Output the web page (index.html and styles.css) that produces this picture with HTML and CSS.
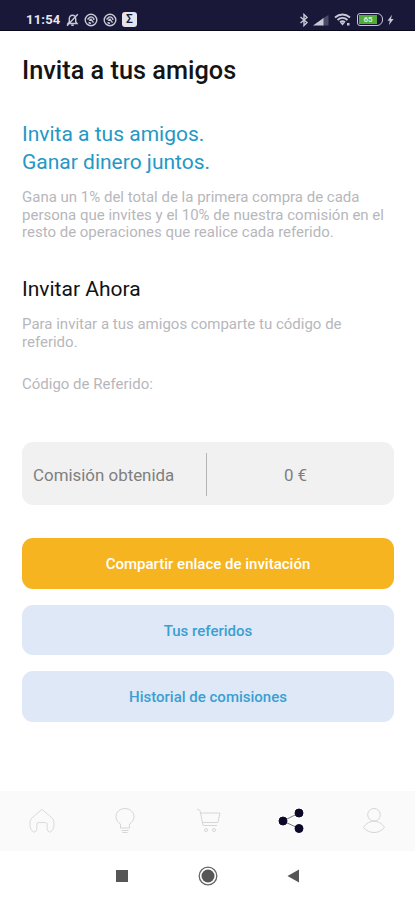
FILE: index.html
```html
<!DOCTYPE html>
<html lang="es">
<head>
  <meta charset="UTF-8">
  <meta name="viewport" content="width=device-width, initial-scale=1">
  <title>Invita a tus amigos</title>
  <link rel="stylesheet" href="styles.css">
</head>
<body>
<div class="screen">
  <header class="status-bar">
    <div class="status-left">
      <span class="clock">11:54</span>
      <svg class="bell" width="13" height="14" viewBox="0 0 13 14">
        <path d="M2 10.5h9L9.7 8.8V5.5C9.7 3.5 8.5 2.3 6.5 2.3S3.3 3.5 3.3 5.5v3.3zM5.3 12.3h2.4M1 12.8 11.8 1.2"/>
      </svg>
      <svg class="sync" width="14" height="14" viewBox="0 0 14 14">
        <circle cx="7" cy="7" r="5.8"/>
        <path d="M3.5 6.5 6 4.2c1.500-.8 3.800.2 4 2.800M5 7.500l2-1.300 2.500 3.500M4.500 9.500l2.500 1"/>
      </svg>
      <svg class="sync" width="14" height="14" viewBox="0 0 14 14">
        <circle cx="7" cy="7" r="5.8"/>
        <path d="M3.5 6.5 6 4.2c1.500-.8 3.800.2 4 2.800M5 7.500l2-1.300 2.500 3.500M4.500 9.500l2.500 1"/>
      </svg>
      <span class="sigma">Σ</span>
    </div>
    <div class="status-right">
      <svg class="bluetooth" width="10" height="14" viewBox="0 0 10 14">
        <path d="m1.500 4 6.500 5.500L5 12.500v-11l3 3L1.500 10"/>
      </svg>
      <svg class="signal" width="16" height="12" viewBox="0 0 16 12">
        <path class="weak" d="M9 4.800 15.500 1v10.500H9z"/>
        <path d="M0 11.500 10.500 4v7.500z"/>
      </svg>
      <svg class="wifi" width="17" height="13" viewBox="0 0 17 13">
        <path d="M1 4.500c4.500-4 10.500-4 15 0M3.500 7c3-2.700 7-2.700 10 0M6 9.300c1.500-1.300 3.500-1.300 5 0"/>
        <path class="fill" d="m6 9.500 2.500 3 2.500-3zM13 10h2.500v2.500H13z"/>
      </svg>
      <span class="battery"><span class="charge">65</span></span>
      <svg class="bolt" width="7" height="12" viewBox="0 0 7 12">
        <path d="M5 .8.5 6.700h2.300L1.800 11.300 6.600 5H4z"/>
      </svg>
    </div>
  </header>

  <main class="content">
    <h1>Invita a tus amigos</h1>

    <h2 class="slogan">Invita a tus amigos.<br>Ganar dinero juntos.</h2>
    <p class="intro">Gana un 1% del total de la primera compra de cada<br>persona que invites y el 10% de nuestra comisión en el<br>resto de operaciones que realice cada referido.</p>

    <h2 class="invite">Invitar Ahora</h2>
    <p class="hint">Para invitar a tus amigos comparte tu código de<br>referido.</p>
    <p class="code">Código de Referido:</p>

    <div class="commission">
      <span class="commission-label">Comisión obtenida</span>
      <span class="commission-value">0 €</span>
    </div>

    <div class="actions">
      <button class="btn primary">Compartir enlace de invitación</button>
      <button class="btn">Tus referidos</button>
      <button class="btn">Historial de comisiones</button>
    </div>
  </main>

  <nav class="tabs">
    <a class="tab">
      <svg width="28" height="28" viewBox="0 0 30 30">
        <path d="M15 2.500 4.500 11.500C2 14 2 16 2.200 20c.3 3.500 1.800 6 4.300 7 1.500 0 3-2 3-4v-4.800c0-1 .5-1.500 1.500-1.500h8c1 0 1.500.5 1.500 1.500V23c0 2 1.500 4 3 4 2.500-1 4-3.500 4.300-7 .2-4 .2-6-2.300-8.500z"/>
      </svg>
    </a>
    <a class="tab">
      <svg width="30" height="30" viewBox="0 0 30 30">
        <path d="M10.500 22v-4C8 16.500 6 14 6 10.800 6 6 10 2.500 15 2.500s9 3.500 9 8.300c0 3.200-2 5.700-4.500 7.200v4zM11.500 24.500h7M12.500 26.500h5"/>
      </svg>
    </a>
    <a class="tab">
      <svg width="30" height="30" viewBox="0 0 30 30">
        <path d="M4 3l3 1.500L10 19.500h14M7.500 7h19.500l-2.200 9.500H9.500"/>
        <circle cx="13" cy="24" r="1.500"/>
        <circle cx="21" cy="24" r="1.500"/>
      </svg>
    </a>
    <a class="tab active">
      <svg width="30" height="30" viewBox="0 0 30 30">
        <path d="M23 7 7 15l16 7.500"/>
        <circle cx="23" cy="7" r="4"/>
        <circle cx="7" cy="15" r="4"/>
        <circle cx="23" cy="22.5" r="4"/>
      </svg>
    </a>
    <a class="tab">
      <svg width="30" height="30" viewBox="0 0 30 30">
        <circle cx="15" cy="8.8" r="6.3"/>
        <path d="M4.500 21.500c3-4.500 6.500-6.200 10.500-6.200s7.500 1.700 10.500 6.200c-3 3.500-6.500 5-10.500 5S7.500 25 4.500 21.500z"/>
      </svg>
    </a>
  </nav>

  <footer class="system-nav">
    <svg width="20" height="20" viewBox="0 0 20 20"><path d="M4 4h12v12H4z"/></svg>
    <svg width="20" height="20" viewBox="0 0 20 20">
      <circle class="ring" cx="10" cy="10" r="8.8"/>
      <circle cx="10" cy="10" r="6.5"/>
    </svg>
    <svg width="20" height="20" viewBox="0 0 20 20"><path d="M3.500 10 15 3.500v13z"/></svg>
  </footer>
</div>
</body>
</html>
```

FILE: styles.css
```css
:root {
  --navy: #191839;
  --blue: #2498c5;
  --muted: #b7b7bb;
  --yellow: #f7b421;
  --light-blue: #dfe8f6;
}

* {
  box-sizing: border-box;
}

body {
  margin: 0;
  font-family: Roboto, "Liberation Sans", sans-serif;
  background: #fff;
}

.screen {
  display: flex;
  flex-direction: column;
  height: 900px;
}

.status-bar {
  display: flex;
  justify-content: space-between;
  height: 31px;
  padding: 8px 21px 0 26px;
  background: var(--navy);
  border-bottom: 1px solid #09091c;
  color: #e6e6ed;
}

.status-left,
.status-right {
  display: flex;
  align-items: center;
  height: 23px;
}

.status-left {
  gap: 5px;
}

.clock {
  width: 35px;
  font-size: 13px;
  font-weight: 700;
  letter-spacing: 0.2px;
}

.status-bar svg {
  fill: none;
  stroke: #c9c9d5;
  stroke-width: 1.4;
}

.sigma {
  width: 15px;
  height: 15px;
  border-radius: 3px;
  background: #e4e4ee;
  color: var(--navy);
  font-size: 12px;
  font-weight: 500;
  line-height: 15px;
  text-align: center;
}

.status-bar .signal,
.status-bar .bolt,
.status-bar .fill {
  fill: #c9c9d5;
  stroke: none;
}

.signal {
  margin-left: 4px;
}

.signal .weak {
  fill: #4b4a66;
}

.status-bar .wifi {
  margin-left: 5px;
  stroke-width: 1.8;
}

.battery {
  width: 26px;
  height: 13px;
  margin: 0 4px 0 6px;
  padding: 1px;
  border: 1.5px solid #c9c9d5;
  border-radius: 3px 6px 6px 3px;
}

.charge {
  display: block;
  width: 18px;
  height: 9px;
  background: #51ad3b;
  color: #d9f0d4;
  font-size: 8px;
  font-weight: 700;
  line-height: 9px;
  text-align: center;
}

.content {
  flex: 1;
  padding: 23px 21px 0 22px;
}

h1,
h2,
p {
  margin: 0;
}

h1 {
  color: #141414;
  font-size: 25.3px;
  font-weight: 500;
  line-height: 34px;
}

h2 {
  font-size: 21px;
  font-weight: 400;
  line-height: 28px;
}

.slogan {
  margin-top: 32px;
  color: var(--blue);
}

p {
  color: var(--muted);
  font-size: 15px;
  line-height: 17.7px;
}

.intro {
  margin-top: 13px;
}

.invite {
  margin-top: 33px;
  color: #111;
}

.hint {
  margin-top: 13px;
}

.code {
  margin-top: 24px;
}

.commission {
  display: grid;
  grid-template-columns: 185px 1fr;
  align-items: center;
  height: 63px;
  margin-top: 49px;
  padding-top: 1px;
  border-radius: 11px;
  background: #f1f1f1;
  color: #7f7f7f;
  font-size: 16.9px;
}

.commission-label {
  padding-top: 1px;
  padding-left: 11px;
  line-height: 42px;
  border-right: 1px solid #b5b5b5;
}

.commission-value {
  padding-top: 1px;
  padding-right: 10px;
  text-align: center;
}

.actions {
  display: grid;
  gap: 16px;
  margin-top: 33px;
}

.btn {
  height: 50.5px;
  padding: 2px 0 0;
  border: none;
  border-radius: 11px;
  background: var(--light-blue);
  color: #3a9fd2;
  font-family: inherit;
  font-size: 15px;
  font-weight: 500;
}

.btn.primary {
  background: var(--yellow);
  color: #fff;
}

.tabs {
  display: grid;
  grid-template-columns: repeat(5, 1fr);
  height: 60px;
  background: #fafafa;
}

.tab {
  display: flex;
  align-items: center;
  justify-content: center;
}

.tab svg {
  fill: none;
  stroke: #d6d6da;
  stroke-width: 1;
}

.tab.active svg {
  fill: #0b0927;
  stroke: #0b0927;
}

.tab.active path {
  fill: none;
  stroke: #77777f;
}

.system-nav {
  display: flex;
  justify-content: center;
  gap: 66px;
  height: 49px;
  padding-top: 15px;
}

.system-nav svg {
  fill: #565656;
}

.system-nav .ring {
  fill: none;
  stroke: #666;
  stroke-width: 1.3;
}
```
